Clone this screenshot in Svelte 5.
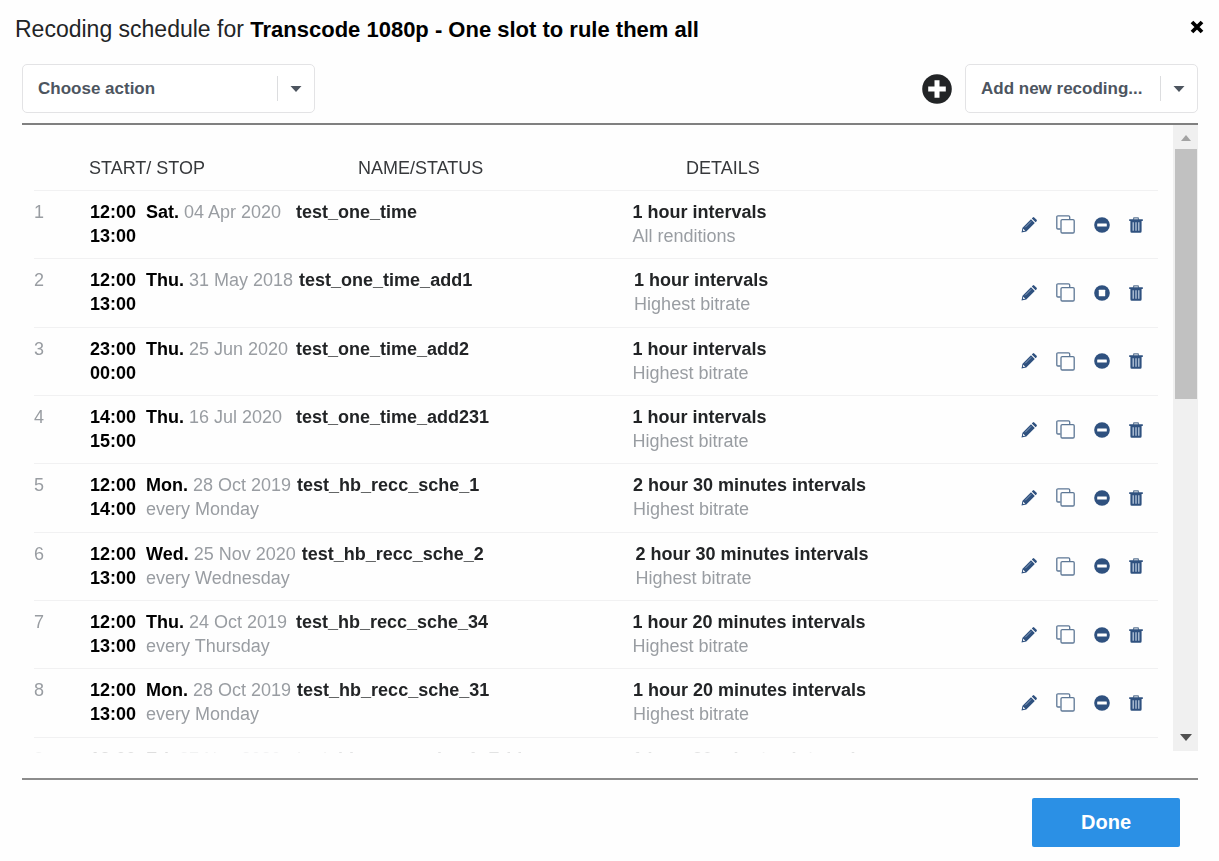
<script>
  let action = $state('');
  let recoding = $state('');

  const rows = [
    { start: '12:00', stop: '13:00', day: 'Sat.', date: '04 Apr 2020', repeat: '', name: 'test_one_time', interval: '1 hour intervals', rendition: 'All renditions' },
    { start: '12:00', stop: '13:00', day: 'Thu.', date: '31 May 2018', repeat: '', name: 'test_one_time_add1', interval: '1 hour intervals', rendition: 'Highest bitrate', stopped: true },
    { start: '23:00', stop: '00:00', day: 'Thu.', date: '25 Jun 2020', repeat: '', name: 'test_one_time_add2', interval: '1 hour intervals', rendition: 'Highest bitrate' },
    { start: '14:00', stop: '15:00', day: 'Thu.', date: '16 Jul 2020', repeat: '', name: 'test_one_time_add231', interval: '1 hour intervals', rendition: 'Highest bitrate' },
    { start: '12:00', stop: '14:00', day: 'Mon.', date: '28 Oct 2019', repeat: 'every Monday', name: 'test_hb_recc_sche_1', interval: '2 hour 30 minutes intervals', rendition: 'Highest bitrate' },
    { start: '12:00', stop: '13:00', day: 'Wed.', date: '25 Nov 2020', repeat: 'every Wednesday', name: 'test_hb_recc_sche_2', interval: '2 hour 30 minutes intervals', rendition: 'Highest bitrate' },
    { start: '12:00', stop: '13:00', day: 'Thu.', date: '24 Oct 2019', repeat: 'every Thursday', name: 'test_hb_recc_sche_34', interval: '1 hour 20 minutes intervals', rendition: 'Highest bitrate' },
    { start: '12:00', stop: '13:00', day: 'Mon.', date: '28 Oct 2019', repeat: 'every Monday', name: 'test_hb_recc_sche_31', interval: '1 hour 20 minutes intervals', rendition: 'Highest bitrate' },
    { start: '12:00', stop: '13:00', day: 'Fri.', date: '27 Nov 2020', repeat: 'every Friday', name: 'test_hb_recc_sche_1_Frid', interval: '1 hour 20 minutes intervals', rendition: 'Highest bitrate' }
  ];
</script>

<main class="dialog">
  <header class="title-bar">
    <h1>Recoding schedule for <strong>Transcode 1080p - One slot to rule them all</strong></h1>
    <button class="icon-button close" aria-label="Close">
      <svg width="14" height="14" viewBox="0 0 14 14"><path d="M2 2l10 10m0-10L2 12" stroke="#000" stroke-width="3.800" /></svg>
    </button>
  </header>

  <div class="toolbar">
    <div class="picker action">
      <select aria-label="Choose action" bind:value={action}>
        <option value="">Choose action</option>
      </select>
      <span class="arrow"><svg width="12" height="6" viewBox="0 0 12 6"><path d="M0.500 0h11L6 6z" fill="currentColor" /></svg></span>
    </div>
    <div class="add">
      <button class="icon-button" aria-label="Add recoding">
        <svg width="30" height="30" viewBox="0 0 30 30"><circle cx="15" cy="15" r="14.8" fill="#222426" /><path d="M15 6.200v17.600M6.200 15h17.600" stroke="#fff" stroke-width="5" /></svg>
      </button>
      <div class="picker new">
        <select aria-label="Add new recoding" bind:value={recoding}>
          <option value="">Add new recoding...</option>
        </select>
        <span class="arrow"><svg width="12" height="6" viewBox="0 0 12 6"><path d="M0.500 0h11L6 6z" fill="currentColor" /></svg></span>
      </div>
    </div>
  </div>

  <section class="schedule">
    <div class="viewport">
      <table>
        <thead>
          <tr>
            <th>START/ STOP</th>
            <th>NAME/STATUS</th>
            <th>DETAILS</th>
          </tr>
        </thead>
        <tbody>
          {#each rows as row, i}
            <tr>
              <td class="muted">{i + 1}</td>
              <td class="time">{row.start}<br />{row.stop}</td>
              <td class="muted"><b class="day">{row.day}</b> {row.date}<br />{row.repeat}</td>
              <td><b>{row.name}</b></td>
              <td class="muted"><b>{row.interval}</b><br />{row.rendition}</td>
              <td class="tools">
                <button class="icon-button" aria-label="Edit">
                  <svg width="16" height="16" viewBox="0 0 16 16">
                    <path d="M0.500 15.500l1-4.800L10 2.200l3.800 3.800-8.500 8.500zM10.800 1.400l1-1q.7-.6 1.400 0l2.400 2.400q.6.700 0 1.400l-1 1z" fill="currentColor" />
                    <path d="M2.300 11.800l1.900 1.900-1.700.4-.6-.6z" fill="#fff" />
                    <path d="M4.200 10.300l6-6" stroke="#9cb0c9" stroke-width=".8" />
                  </svg>
                </button>
                <button class="icon-button" aria-label="Duplicate">
                  <svg width="19" height="19" viewBox="0 0 19 19" fill="none" stroke="#5d7795" stroke-width="1.300">
                    <path d="M4.500 14H2q-1.200 0-1.200-1.200V2Q.8.800 2 .800h10.500q1.200 0 1.200 1.200v2.500" />
                    <rect x="5" y="4.600" width="13.200" height="13.400" rx="1.200" />
                  </svg>
                </button>
                <button class="icon-button" aria-label={row.stopped ? 'Stop' : 'Disable'}>
                  <svg width="16" height="16" viewBox="0 0 16 16">
                    <circle cx="8" cy="8" r="7.800" fill="currentColor" />
                    {#if row.stopped}
                      <rect x="4.800" y="4.800" width="6.400" height="6.400" rx=".5" fill="#fff" />
                    {:else}
                      <rect x="3.200" y="6.500" width="9.600" height="3" rx=".5" fill="#fff" />
                    {/if}
                  </svg>
                </button>
                <button class="icon-button" aria-label="Delete">
                  <svg width="14" height="16" viewBox="0 0 14 16">
                    <path d="M4.300 2.800l.6-1.900h4.200l.6 1.900" fill="none" stroke="#5d7795" stroke-width="1.200" />
                    <path d="M.2 2.200h13.600v1.700H.2zM1.400 3.800h11.200v10.400q0 1.500-1.300 1.500H2.700q-1.300 0-1.300-1.500z" fill="currentColor" />
                    <path d="M4.200 5.200v8.500M7 5.200v8.500M9.800 5.200v8.500" stroke="#b9c9dc" stroke-width="1.300" />
                  </svg>
                </button>
              </td>
            </tr>
          {/each}
        </tbody>
      </table>
    </div>
    <div class="scrollbar" aria-hidden="true">
      <svg width="10" height="6" viewBox="0 0 10 6"><path d="M0 6h10L5 0z" fill="#a3a3a3" /></svg>
      <div class="track"><div class="thumb"></div></div>
      <svg width="12" height="7" viewBox="0 0 12 7"><path d="M0 0h12L6 7z" fill="#505050" /></svg>
    </div>
  </section>

  <footer>
    <button class="done">Done</button>
  </footer>
</main>

<style>
  :global(body) {
    margin: 0;
    background: #fefefe;
  }
  .dialog {
    box-sizing: border-box;
    display: flex;
    flex-direction: column;
    height: 100vh;
    padding: 14px 21px 14px 22px;
    font: 18px/24px "Liberation Sans", Arial, sans-serif;
    color: #222426;
  }
  .title-bar {
    display: flex;
    justify-content: space-between;
    align-items: center;
    margin: 0 -6px 0 -7px;
    height: 30px;
  }
  h1 {
    margin: 0;
    font-size: 23px;
    line-height: 30px;
    font-weight: 400;
  }
  h1 strong {
    font-size: 22px;
    color: #000;
  }
  .icon-button {
    display: flex;
    padding: 0;
    border: 0;
    background: none;
    color: #2f517f;
    cursor: pointer;
  }
  .close {
    padding-bottom: 4px;
  }
  .toolbar {
    display: flex;
    justify-content: space-between;
    padding: 20px 0 10px;
    border-bottom: 2px solid #808080;
  }
  .add {
    display: flex;
    align-items: center;
    gap: 13px;
  }
  .picker {
    display: grid;
    align-items: center;
    box-sizing: border-box;
    height: 49px;
    border: 1px solid #e3e3e5;
    border-radius: 5px;
    background: #fff;
    color: #4d555f;
  }
  .action {
    width: 293px;
  }
  .new {
    width: 233px;
  }
  .picker select {
    grid-area: 1 / 1;
    width: 100%;
    height: 100%;
    padding: 0 40px 0 15px;
    border: 0;
    background: none;
    appearance: none;
    font: bold 17px/24px "Liberation Sans", Arial, sans-serif;
    color: inherit;
  }
  .arrow {
    grid-area: 1 / 1;
    justify-self: end;
    display: flex;
    align-items: center;
    justify-content: center;
    width: 36px;
    height: 25px;
    border-left: 1px solid #dcdddf;
    pointer-events: none;
  }
  .schedule {
    display: flex;
    flex: 1;
    min-height: 0;
  }
  .viewport {
    flex: 1;
    overflow-y: auto;
    scrollbar-width: none;
    padding: 0 15px 0 12px;
    mask-image: linear-gradient(to top, transparent, #000 4px);
  }
  table,
  thead {
    display: block;
  }
  tbody {
    display: grid;
    height: 615px;
    grid-auto-rows: 1fr;
  }
  tr {
    display: grid;
    box-sizing: border-box;
    border-bottom: 1px solid #f1f1f2;
  }
  th,
  td {
    padding: 0;
    text-align: left;
    font-weight: 400;
    white-space: nowrap;
  }
  th {
    color: #36383b;
  }
  thead tr {
    grid-template-columns: 269px 328px 1fr;
    padding: 31px 0 10px 55px;
  }
  tbody tr {
    grid-template-columns: 56px 56px minmax(150px, max-content) 336fr 388fr 122px;
    padding: 9px 15px 9px 0;
  }
  td:nth-child(3) {
    padding-right: 6px;
  }
  .muted {
    color: #999da2;
  }
  td b,
  .time {
    font-weight: 700;
    color: #222426;
  }
  .time,
  td .day {
    color: #000;
  }
  .tools {
    display: flex;
    align-items: center;
    justify-content: space-between;
  }
  .scrollbar {
    display: flex;
    flex-direction: column;
    align-items: center;
    justify-content: space-between;
    box-sizing: border-box;
    width: 25px;
    margin-bottom: 2px;
    padding: 10px 0;
    background: #f0f0f0;
  }
  .track {
    flex: 1;
    width: 22px;
    margin: 8px 0;
  }
  .thumb {
    height: 250px;
    background: #c1c1c1;
  }
  footer {
    display: flex;
    justify-content: flex-end;
    margin-top: 25px;
    padding: 18px 18px 0;
    border-top: 2px solid #8c8c8c;
  }
  .done {
    width: 148px;
    height: 49px;
    padding: 0 0 2px;
    border: 0;
    border-radius: 2px;
    background: #2b90e5;
    color: #fff;
    font: bold 20px/24px "Liberation Sans", Arial, sans-serif;
  }
</style>
